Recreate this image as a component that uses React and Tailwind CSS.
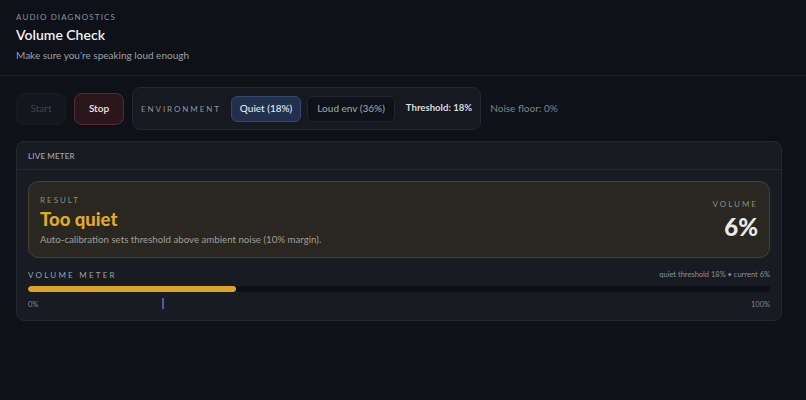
import { useState } from "react";

const App = () => {
  const [env, setEnv] = useState("quiet");
  const volume = 28;
  const threshold = 18;

  return (
    <div className="min-h-[400px] bg-[#0e1118] text-[#e5e7eb] font-['Lato',sans-serif]">
      {/* header */}
      <div className="px-4 pt-[11px] pb-[13px] border-b border-[#1f232c]">
        <div className="text-[8px] tracking-[0.14em] text-[#8b9099] leading-[12px]">AUDIO DIAGNOSTICS</div>
        <h1 className="text-[14px] font-semibold text-[#eef0f3] leading-[18px] mt-[3px]">Volume Check</h1>
        <p className="text-[10px] text-[#9aa0a8] leading-[14px] mt-[4px]">Make sure you’re speaking loud enough</p>
      </div>

      <div className="px-4 pt-[11px]">
        {/* controls */}
        <div className="flex items-center gap-2">
          <button
            disabled
            className="w-[50px] h-[32px] rounded-lg bg-[#13161d] border border-[#181b22] text-[10px] text-[#3e434c]"
          >
            Start
          </button>
          <button className="w-[50px] h-[32px] rounded-lg bg-[#2a161b] border border-[#5a2a30] text-[10px] font-semibold text-[#f1e6e7]">
            Stop
          </button>
          <div className="flex items-center h-[43px] pl-[8px] pr-[8px] rounded-lg bg-[#161920] border border-[#232731]">
            <span className="text-[8px] tracking-[0.24em] text-[#8f949c] mr-[10px]">ENVIRONMENT</span>
            <button
              onClick={() => setEnv("quiet")}
              className={
                env === "quiet"
                  ? "h-[26px] px-[8px] rounded-md bg-[#22304e] border border-[#34476e] text-[10px] font-medium text-[#e3e8f2]"
                  : "h-[26px] px-[8px] rounded-md bg-[#0e1117] border border-[#20242d] text-[10px] font-medium text-[#9aa0a8]"
              }
            >
              Quiet (18%)
            </button>
            <button
              onClick={() => setEnv("loud")}
              className={
                env === "loud"
                  ? "ml-[6px] h-[26px] px-[9px] rounded-md bg-[#22304e] border border-[#34476e] text-[10px] font-medium text-[#e3e8f2]"
                  : "ml-[6px] h-[26px] px-[9px] rounded-md bg-[#0e1117] border border-[#20242d] text-[10px] font-medium text-[#9aa0a8]"
              }
            >
              Loud env (36%)
            </button>
            <span className="ml-[11px] text-[9.6px] font-bold text-[#d9dce1]">Threshold: 18%</span>
          </div>
          <span className="ml-[1px] text-[10px] text-[#7d838c]">Noise floor: 0%</span>
        </div>

        {/* live meter card */}
        <div className="mt-[11px] w-[766px] rounded-lg bg-[#181b22] border border-[#232731]">
          <div className="px-[11px] h-[28px] flex items-center border-b border-[#232731]">
            <span className="text-[8px] font-semibold text-[#9aa0a8] tracking-[0.02em]">LIVE METER</span>
          </div>
          <div className="px-[11px] pt-[11px] pb-[10px]">
            <div className="flex items-center justify-between h-[77px] rounded-[10px] bg-[#29271f] border border-[#474027] px-[11px]">
              <div>
                <div className="text-[8px] tracking-[0.25em] text-[#8d8c86] leading-[12px]">RESULT</div>
                <div className="text-[18.5px] font-black text-[#e0a82f] leading-[20px] mt-[3px]">Too quiet</div>
                <div className="text-[9.7px] text-[#a09e98] leading-[14px] mt-[3px]">
                  Auto-calibration sets threshold above ambient noise (10% margin).
                </div>
              </div>
              <div className="text-right">
                <div className="text-[8px] tracking-[0.25em] text-[#8d8c86] leading-[12px]">VOLUME</div>
                <div className="text-[24px] font-black text-[#e6e8ec] leading-[28px] mt-[3px]">6%</div>
              </div>
            </div>

            <div className="mt-[11px] h-[12px] flex items-center justify-between leading-[12px]">
              <span className="text-[8px] tracking-[0.28em] text-[#9aa0a8]">VOLUME METER</span>
              <span className="text-[7.5px] text-[#8b9099]">quiet threshold 18% • current 6%</span>
            </div>
            <div className="mt-[5px] h-[6px] rounded-full bg-[#0d1016] overflow-hidden">
              <div className="h-full rounded-full bg-[#d8a42c]" style={{ width: `${volume}%` }} />
            </div>
            <div className="relative mt-[6px] h-[12px] flex items-center justify-between text-[7.5px] text-[#80868f]">
              <span className="mt-[2px]">0%</span>
              <div
                className="absolute top-0 w-[2px] h-[11px] bg-[#3f5fa6]"
                style={{ left: `${threshold}%` }}
              />
              <span className="mt-[2px]">100%</span>
            </div>
          </div>
        </div>
      </div>
    </div>
  );
};

export default App;
